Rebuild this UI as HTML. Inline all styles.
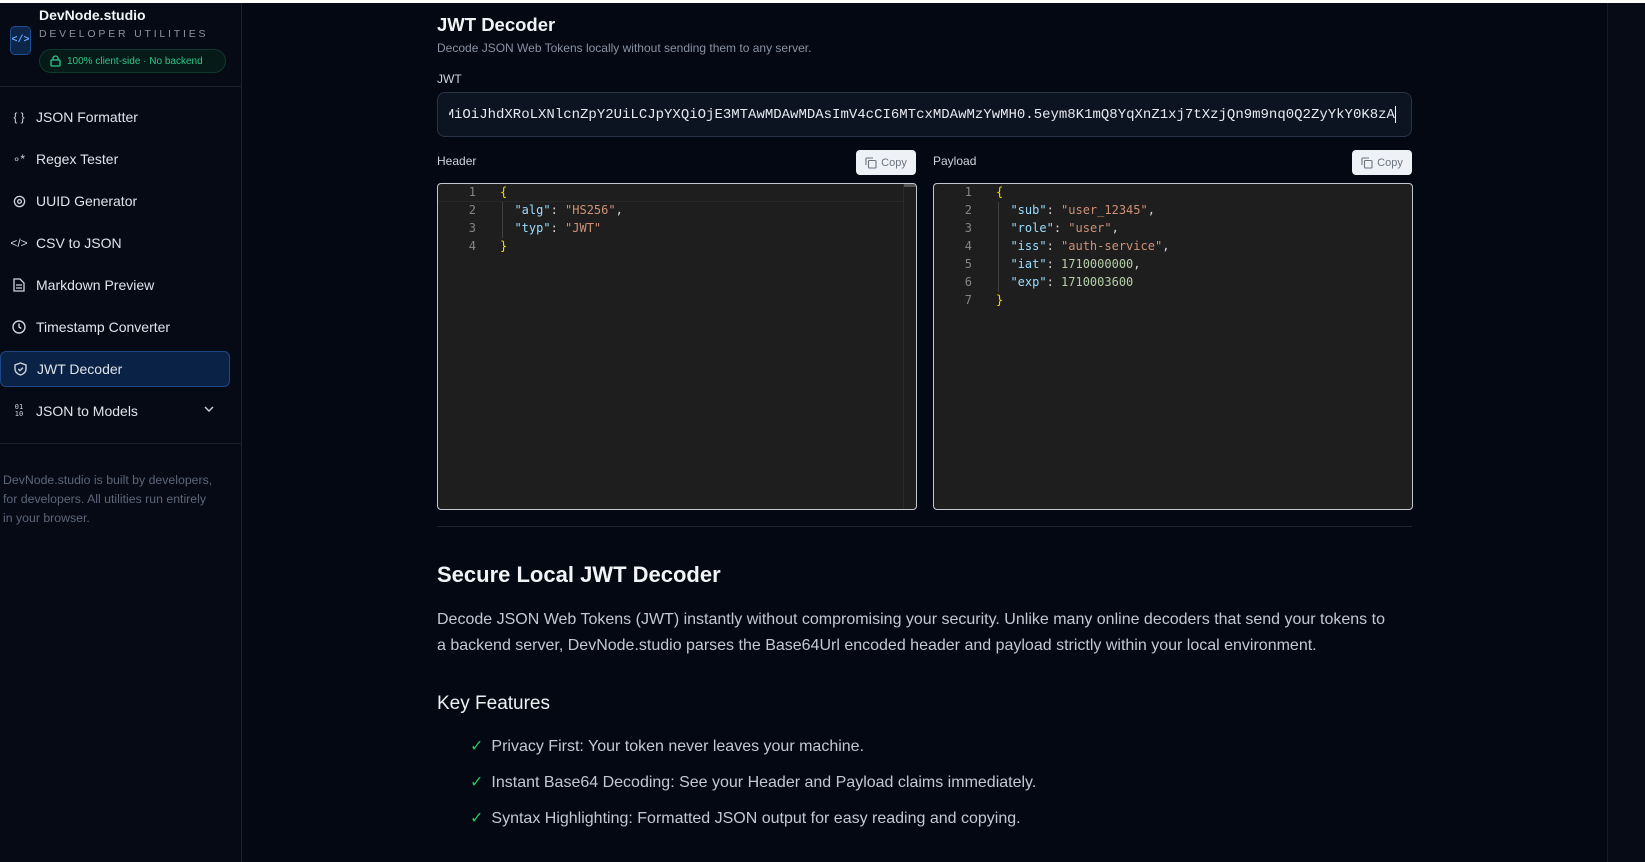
<!DOCTYPE html>
<html><head><meta charset="utf-8"><style>
*{box-sizing:border-box;margin:0;padding:0}
html,body{width:1645px;height:862px;overflow:hidden;background:#030812;font-family:"Liberation Sans",sans-serif;color:#e6e9ef}
.top{position:absolute;left:0;top:0;width:1645px;height:3px;background:#fff}
.side{position:absolute;left:0;top:3px;width:242px;height:859px;background:#050a15;border-right:1px solid #1a2130}
.logo{position:absolute;left:10px;top:23px;width:21px;height:29px;border:1px solid #1d4f91;border-radius:5px;background:#0c2548;color:#6aa8ff;font:bold 10px "Liberation Mono",monospace;display:flex;align-items:center;justify-content:center}
.t1{position:absolute;left:39px;top:4px;font-size:14px;font-weight:bold;color:#f2f4f8}
.t2{position:absolute;left:39px;top:25px;font-size:10.5px;letter-spacing:2.8px;color:#8a93a3}
.badge{position:absolute;left:39px;top:46px;width:187px;height:24px;border:1px solid #0f3a2e;background:#061a17;border-radius:12px;color:#2fc78a;font-size:10px;display:flex;align-items:center;padding-left:10px;gap:6px}
.sep{position:absolute;left:0;width:241px;height:1px;background:#1a2130}
.nav{position:absolute;left:0;width:230px;height:36px;display:flex;align-items:center;padding-left:12px;font-size:14px;color:#dfe3ea}
.nav .ic{width:14px;margin-right:10px;display:flex;justify-content:center;color:#cfd4dc;font-size:12px}
.nav.act{background:#0a2246;border:1px solid #1d4787;border-radius:6px}
.foot{position:absolute;left:3px;top:468px;width:212px;font-size:12.3px;line-height:19px;color:#5d6779}
.rp{position:absolute;left:1607px;top:3px;width:38px;height:859px;background:#060b16;border-left:1px solid #141b28}
.m{position:absolute;left:437px}
.mono{font-family:"DejaVu Sans Mono","Liberation Mono",monospace}
.input{top:92px;width:975px;height:45px;border:1px solid #2a3446;border-radius:8px;background:#0d1421;font-family:"Liberation Mono",monospace;font-size:14px;color:#e6e9ef;display:flex;align-items:center;padding-left:11px;overflow:hidden;white-space:nowrap}
.copy{position:absolute;top:150px;width:60px;height:25px;background:#eef1f5;border-radius:4px;color:#6b7280;font-size:11px;display:flex;align-items:center;justify-content:center;gap:4px}
.ed{position:absolute;top:183px;width:480px;height:327px;background:#1e1e1e;border:1px solid #c3c8d0;border-radius:4px;font-size:12px;overflow:hidden}
.ln{position:absolute;left:0;width:38px;text-align:right;color:#858585}
.cd{position:absolute;left:62px;white-space:pre;color:#d4d4d4}
.k{color:#9cdcfe}.s{color:#ce9178}.n{color:#b5cea8}.b{color:#ffd700}
.guide{position:absolute;left:64px;width:1px;background:#404040}
h2{position:absolute;left:437px;top:562px;font-size:22px;font-weight:600;color:#f1f3f6}
.p{position:absolute;left:437px;top:607px;width:958px;font-size:16px;line-height:26px;color:#c3c9d3}
.li{position:absolute;left:470px;font-size:16px;color:#c3c9d3}
.li span{color:#22c55e;margin-right:8px}
</style></head><body>
<div class="top"></div>
<div class="side">
<div class="logo">&lt;/&gt;</div>
<div class="t1">DevNode.studio</div>
<div class="t2">DEVELOPER UTILITIES</div>
<div class="badge"><svg width="11" height="12" viewBox="0 0 11 12"><rect x="1" y="5" width="9" height="6" rx="1" fill="none" stroke="#2fc78a" stroke-width="1.3"/><path d="M3 5V3.5a2.5 2.5 0 0 1 5 0V5" fill="none" stroke="#2fc78a" stroke-width="1.3"/></svg>100% client-side · No backend</div>
<div class="sep" style="top:83px"></div>
<div class="nav" style="top:96px"><span class="ic">{ }</span>JSON Formatter</div>
<div class="nav" style="top:138px"><span class="ic">∘*</span>Regex Tester</div>
<div class="nav" style="top:180px"><span class="ic"><svg width="13" height="13" viewBox="0 0 14 14"><circle cx="7" cy="7" r="5.5" fill="none" stroke="#cfd4dc" stroke-width="1.4"/><circle cx="7" cy="7" r="2" fill="none" stroke="#cfd4dc" stroke-width="1.4"/></svg></span>UUID Generator</div>
<div class="nav" style="top:222px"><span class="ic">&lt;/&gt;</span>CSV to JSON</div>
<div class="nav" style="top:264px"><span class="ic"><svg width="12" height="14" viewBox="0 0 12 14"><path d="M1 1h6l4 4v8H1z M3 7h6M3 10h6" fill="none" stroke="#cfd4dc" stroke-width="1.3"/></svg></span>Markdown Preview</div>
<div class="nav" style="top:306px"><span class="ic"><svg width="14" height="14" viewBox="0 0 14 14"><circle cx="7" cy="7" r="6" fill="none" stroke="#cfd4dc" stroke-width="1.4"/><path d="M7 3.5V7l2.3 1.5" fill="none" stroke="#cfd4dc" stroke-width="1.4"/></svg></span>Timestamp Converter</div>
<div class="nav act" style="top:348px"><span class="ic"><svg width="13" height="14" viewBox="0 0 13 14"><path d="M6.5 1L12 3v4c0 3-2.5 5-5.5 6C3.5 12 1 10 1 7V3z" fill="none" stroke="#cfd4dc" stroke-width="1.4"/><path d="M4.3 7l1.6 1.6L9 5.6" fill="none" stroke="#cfd4dc" stroke-width="1.4"/></svg></span>JWT Decoder</div>
<div class="nav" style="top:390px"><span class="ic mono" style="font-size:7px;line-height:7px;text-align:center">01<br>10</span>JSON to Models<span style="position:absolute;left:203px;top:9px"><svg width="12" height="12" viewBox="0 0 12 12"><path d="M2 4l4 4 4-4" fill="none" stroke="#cfd4dc" stroke-width="1.4"/></svg></span></div>
<div class="sep" style="top:440px"></div>
<div class="foot">DevNode.studio is built by developers, for developers. All utilities run entirely in your browser.</div>
</div>
<div class="rp"></div>

<div class="m" style="top:14px;font-size:18.5px;font-weight:600;color:#f1f3f6">JWT Decoder</div>
<div class="m" style="top:41px;font-size:12px;color:#8a93a3">Decode JSON Web Tokens locally without sending them to any server.</div>
<div class="m" style="top:72px;font-size:12px;color:#cfd4dc">JWT</div>
<div class="m input"><span style="display:inline-block;width:5px;overflow:hidden;direction:rtl">M</span>iOiJhdXRoLXNlcnZpY2UiLCJpYXQiOjE3MTAwMDAwMDAsImV4cCI6MTcxMDAwMzYwMH0.5eym8K1mQ8YqXnZ1xj7tXzjQn9m9nq0Q2ZyYkY0K8zA<span style="display:inline-block;width:1px;height:17px;background:#fff"></span></div>

<div class="m" style="top:154px;font-size:12px;color:#cfd4dc">Header</div>
<div class="copy" style="left:856px"><svg width="12" height="12" viewBox="0 0 12 12"><rect x="3.5" y="3.5" width="7.5" height="7.5" rx="1" fill="none" stroke="#6b7280" stroke-width="1.1"/><path d="M1 8V2a1 1 0 0 1 1-1h6" fill="none" stroke="#6b7280" stroke-width="1.1"/></svg>Copy</div>
<div style="position:absolute;left:933px;top:154px;font-size:12px;color:#cfd4dc">Payload</div>
<div class="copy" style="left:1352px"><svg width="12" height="12" viewBox="0 0 12 12"><rect x="3.5" y="3.5" width="7.5" height="7.5" rx="1" fill="none" stroke="#6b7280" stroke-width="1.1"/><path d="M1 8V2a1 1 0 0 1 1-1h6" fill="none" stroke="#6b7280" stroke-width="1.1"/></svg>Copy</div>

<div class="ed mono" style="left:437px">
<div style="position:absolute;left:0;top:0;width:466px;height:18px;border-bottom:1px solid #282828"></div>
<div style="position:absolute;left:465px;top:0;width:14px;height:327px;border-left:1px solid #2a2a2a"></div>
<div style="position:absolute;left:466px;top:0;width:13px;height:3px;background:#555"></div>
<div class="guide" style="top:18px;height:36px"></div>
<div class="ln" style="top:1px">1</div><div class="cd" style="top:1px"><span class="b">{</span></div>
<div class="ln" style="top:19px">2</div><div class="cd" style="top:19px">  <span class="k">"alg"</span>: <span class="s">"HS256"</span>,</div>
<div class="ln" style="top:37px">3</div><div class="cd" style="top:37px">  <span class="k">"typ"</span>: <span class="s">"JWT"</span></div>
<div class="ln" style="top:55px">4</div><div class="cd" style="top:55px"><span class="b">}</span></div>
</div>

<div class="ed mono" style="left:933px">
<div class="guide" style="top:18px;height:90px"></div>
<div class="ln" style="top:1px">1</div><div class="cd" style="top:1px"><span class="b">{</span></div>
<div class="ln" style="top:19px">2</div><div class="cd" style="top:19px">  <span class="k">"sub"</span>: <span class="s">"user_12345"</span>,</div>
<div class="ln" style="top:37px">3</div><div class="cd" style="top:37px">  <span class="k">"role"</span>: <span class="s">"user"</span>,</div>
<div class="ln" style="top:55px">4</div><div class="cd" style="top:55px">  <span class="k">"iss"</span>: <span class="s">"auth-service"</span>,</div>
<div class="ln" style="top:73px">5</div><div class="cd" style="top:73px">  <span class="k">"iat"</span>: <span class="n">1710000000</span>,</div>
<div class="ln" style="top:91px">6</div><div class="cd" style="top:91px">  <span class="k">"exp"</span>: <span class="n">1710003600</span></div>
<div class="ln" style="top:109px">7</div><div class="cd" style="top:109px"><span class="b">}</span></div>
</div>

<div style="position:absolute;left:437px;top:526px;width:975px;height:1px;background:#1c2332"></div>
<h2>Secure Local JWT Decoder</h2>
<div class="p">Decode JSON Web Tokens (JWT) instantly without compromising your security. Unlike many online decoders that send your tokens to a backend server, DevNode.studio parses the Base64Url encoded header and payload strictly within your local environment.</div>
<div style="position:absolute;left:437px;top:693px;font-size:19px;color:#eef0f4">Key Features</div>
<div class="li" style="top:736px"><span>✓</span>Privacy First: Your token never leaves your machine.</div>
<div class="li" style="top:772px"><span>✓</span>Instant Base64 Decoding: See your Header and Payload claims immediately.</div>
<div class="li" style="top:808px"><span>✓</span>Syntax Highlighting: Formatted JSON output for easy reading and copying.</div>
</body></html>
